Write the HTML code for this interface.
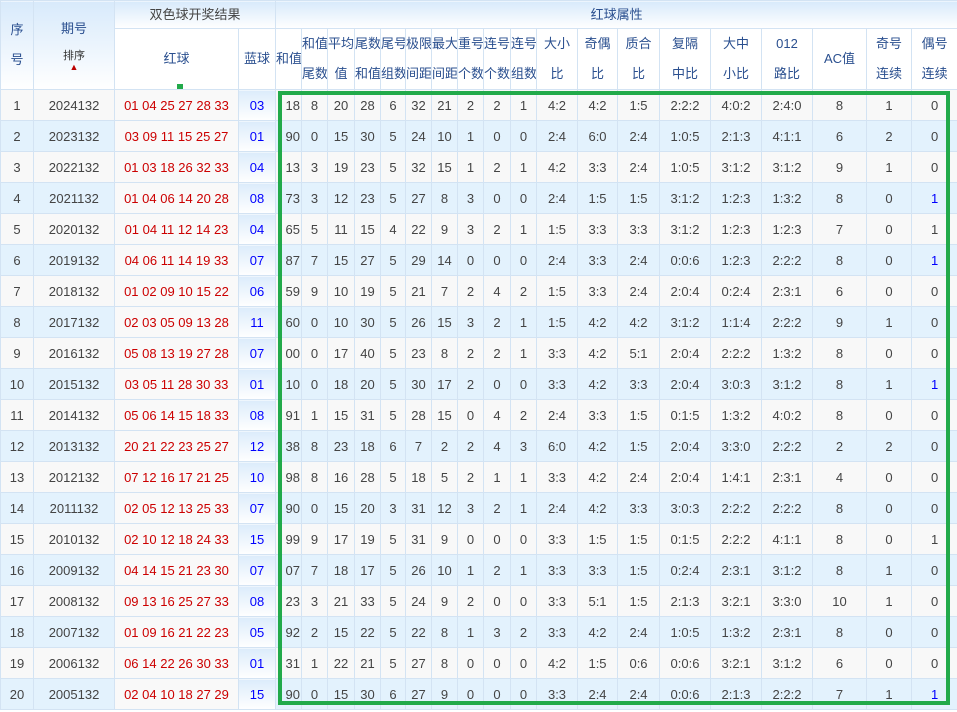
<!DOCTYPE html>
<html><head><meta charset="utf-8">
<style>
body{margin:0;width:957px;height:712px;overflow:hidden;background:#fff;font-family:"Liberation Sans","Noto Sans CJK SC",sans-serif;}
table{border-collapse:collapse;table-layout:fixed;width:957px;position:absolute;left:0;top:0;}
td,th{border:1px solid #d3e3f3;padding:0;text-align:center;font-size:13px;color:#444;overflow:hidden;white-space:nowrap;font-weight:normal;}
thead th{background:linear-gradient(#d8eafb,#fff);color:#2a4f8f;line-height:30px;}
thead tr.r1 th{height:27px;line-height:27px;}
thead tr.r2 th{height:59px;background:linear-gradient(#fff,#fff);}
tbody td{height:30px;}
tbody tr:nth-child(odd) td{background:#f8f8f8;}
tbody tr:nth-child(even) td{background:#e3f2fd;}
tbody td.rb{background:#f9f9f9 !important;color:#c00;font-size:13px;}
tbody td.bb{background:linear-gradient(#dcecfb,#fff) !important;color:#00f;}
tbody td.s{text-align:right;padding-right:1px;}
.b{color:#00f !important;}
#g{position:absolute;left:278px;top:91px;width:664px;height:606px;border:4px solid #22aa4a;}
</style></head><body>
<table>
<colgroup><col style="width:33px"><col style="width:81px"><col style="width:124px"><col style="width:37px"><col style="width:26px"><col style="width:26px"><col style="width:27px"><col style="width:26px"><col style="width:25px"><col style="width:26px"><col style="width:26px"><col style="width:26px"><col style="width:27px"><col style="width:26px"><col style="width:41px"><col style="width:40px"><col style="width:42px"><col style="width:51px"><col style="width:51px"><col style="width:51px"><col style="width:54px"><col style="width:45px"><col style="width:46px"></colgroup>
<thead>
<tr class="r1"><th rowspan="2" style="line-height:30px">序<br>号</th><th rowspan="2"><div style="line-height:20px">期号</div><div style="font-size:11px;line-height:14px;margin-top:10px;color:#333">排序</div><div style="color:#b00;font-size:9px;line-height:8px">▲</div></th><th colspan="2" style="color:#444">双色球开奖结果</th><th colspan="19">红球属性</th></tr>
<tr class="r2"><th style="position:relative">红球<div style="position:absolute;left:62px;bottom:-1px;width:6px;height:6px;background:#22aa4a"></div></th><th>蓝球</th><th>和值</th><th>和值<br>尾数</th><th>平均<br>值</th><th>尾数<br>和值</th><th>尾号<br>组数</th><th>极限<br>间距</th><th>最大<br>间距</th><th>重号<br>个数</th><th>连号<br>个数</th><th>连号<br>组数</th><th>大小<br>比</th><th>奇偶<br>比</th><th>质合<br>比</th><th>复隔<br>中比</th><th>大中<br>小比</th><th>012<br>路比</th><th>AC值</th><th>奇号<br>连续</th><th>偶号<br>连续</th></tr>
</thead>
<tbody>
<tr><td>1</td><td>2024132</td><td class="rb">01 04 25 27 28 33</td><td class="bb">03</td><td class="s">18</td><td>8</td><td>20</td><td>28</td><td>6</td><td>32</td><td>21</td><td>2</td><td>2</td><td>1</td><td>4:2</td><td>4:2</td><td>1:5</td><td>2:2:2</td><td>4:0:2</td><td>2:4:0</td><td>8</td><td>1</td><td>0</td></tr>
<tr><td>2</td><td>2023132</td><td class="rb">03 09 11 15 25 27</td><td class="bb">01</td><td class="s">90</td><td>0</td><td>15</td><td>30</td><td>5</td><td>24</td><td>10</td><td>1</td><td>0</td><td>0</td><td>2:4</td><td>6:0</td><td>2:4</td><td>1:0:5</td><td>2:1:3</td><td>4:1:1</td><td>6</td><td>2</td><td>0</td></tr>
<tr><td>3</td><td>2022132</td><td class="rb">01 03 18 26 32 33</td><td class="bb">04</td><td class="s">13</td><td>3</td><td>19</td><td>23</td><td>5</td><td>32</td><td>15</td><td>1</td><td>2</td><td>1</td><td>4:2</td><td>3:3</td><td>2:4</td><td>1:0:5</td><td>3:1:2</td><td>3:1:2</td><td>9</td><td>1</td><td>0</td></tr>
<tr><td>4</td><td>2021132</td><td class="rb">01 04 06 14 20 28</td><td class="bb">08</td><td class="s">73</td><td>3</td><td>12</td><td>23</td><td>5</td><td>27</td><td>8</td><td>3</td><td>0</td><td>0</td><td>2:4</td><td>1:5</td><td>1:5</td><td>3:1:2</td><td>1:2:3</td><td>1:3:2</td><td>8</td><td>0</td><td class="b">1</td></tr>
<tr><td>5</td><td>2020132</td><td class="rb">01 04 11 12 14 23</td><td class="bb">04</td><td class="s">65</td><td>5</td><td>11</td><td>15</td><td>4</td><td>22</td><td>9</td><td>3</td><td>2</td><td>1</td><td>1:5</td><td>3:3</td><td>3:3</td><td>3:1:2</td><td>1:2:3</td><td>1:2:3</td><td>7</td><td>0</td><td>1</td></tr>
<tr><td>6</td><td>2019132</td><td class="rb">04 06 11 14 19 33</td><td class="bb">07</td><td class="s">87</td><td>7</td><td>15</td><td>27</td><td>5</td><td>29</td><td>14</td><td>0</td><td>0</td><td>0</td><td>2:4</td><td>3:3</td><td>2:4</td><td>0:0:6</td><td>1:2:3</td><td>2:2:2</td><td>8</td><td>0</td><td class="b">1</td></tr>
<tr><td>7</td><td>2018132</td><td class="rb">01 02 09 10 15 22</td><td class="bb">06</td><td class="s">59</td><td>9</td><td>10</td><td>19</td><td>5</td><td>21</td><td>7</td><td>2</td><td>4</td><td>2</td><td>1:5</td><td>3:3</td><td>2:4</td><td>2:0:4</td><td>0:2:4</td><td>2:3:1</td><td>6</td><td>0</td><td>0</td></tr>
<tr><td>8</td><td>2017132</td><td class="rb">02 03 05 09 13 28</td><td class="bb">11</td><td class="s">60</td><td>0</td><td>10</td><td>30</td><td>5</td><td>26</td><td>15</td><td>3</td><td>2</td><td>1</td><td>1:5</td><td>4:2</td><td>4:2</td><td>3:1:2</td><td>1:1:4</td><td>2:2:2</td><td>9</td><td>1</td><td>0</td></tr>
<tr><td>9</td><td>2016132</td><td class="rb">05 08 13 19 27 28</td><td class="bb">07</td><td class="s">00</td><td>0</td><td>17</td><td>40</td><td>5</td><td>23</td><td>8</td><td>2</td><td>2</td><td>1</td><td>3:3</td><td>4:2</td><td>5:1</td><td>2:0:4</td><td>2:2:2</td><td>1:3:2</td><td>8</td><td>0</td><td>0</td></tr>
<tr><td>10</td><td>2015132</td><td class="rb">03 05 11 28 30 33</td><td class="bb">01</td><td class="s">10</td><td>0</td><td>18</td><td>20</td><td>5</td><td>30</td><td>17</td><td>2</td><td>0</td><td>0</td><td>3:3</td><td>4:2</td><td>3:3</td><td>2:0:4</td><td>3:0:3</td><td>3:1:2</td><td>8</td><td>1</td><td class="b">1</td></tr>
<tr><td>11</td><td>2014132</td><td class="rb">05 06 14 15 18 33</td><td class="bb">08</td><td class="s">91</td><td>1</td><td>15</td><td>31</td><td>5</td><td>28</td><td>15</td><td>0</td><td>4</td><td>2</td><td>2:4</td><td>3:3</td><td>1:5</td><td>0:1:5</td><td>1:3:2</td><td>4:0:2</td><td>8</td><td>0</td><td>0</td></tr>
<tr><td>12</td><td>2013132</td><td class="rb">20 21 22 23 25 27</td><td class="bb">12</td><td class="s">38</td><td>8</td><td>23</td><td>18</td><td>6</td><td>7</td><td>2</td><td>2</td><td>4</td><td>3</td><td>6:0</td><td>4:2</td><td>1:5</td><td>2:0:4</td><td>3:3:0</td><td>2:2:2</td><td>2</td><td>2</td><td>0</td></tr>
<tr><td>13</td><td>2012132</td><td class="rb">07 12 16 17 21 25</td><td class="bb">10</td><td class="s">98</td><td>8</td><td>16</td><td>28</td><td>5</td><td>18</td><td>5</td><td>2</td><td>1</td><td>1</td><td>3:3</td><td>4:2</td><td>2:4</td><td>2:0:4</td><td>1:4:1</td><td>2:3:1</td><td>4</td><td>0</td><td>0</td></tr>
<tr><td>14</td><td>2011132</td><td class="rb">02 05 12 13 25 33</td><td class="bb">07</td><td class="s">90</td><td>0</td><td>15</td><td>20</td><td>3</td><td>31</td><td>12</td><td>3</td><td>2</td><td>1</td><td>2:4</td><td>4:2</td><td>3:3</td><td>3:0:3</td><td>2:2:2</td><td>2:2:2</td><td>8</td><td>0</td><td>0</td></tr>
<tr><td>15</td><td>2010132</td><td class="rb">02 10 12 18 24 33</td><td class="bb">15</td><td class="s">99</td><td>9</td><td>17</td><td>19</td><td>5</td><td>31</td><td>9</td><td>0</td><td>0</td><td>0</td><td>3:3</td><td>1:5</td><td>1:5</td><td>0:1:5</td><td>2:2:2</td><td>4:1:1</td><td>8</td><td>0</td><td>1</td></tr>
<tr><td>16</td><td>2009132</td><td class="rb">04 14 15 21 23 30</td><td class="bb">07</td><td class="s">07</td><td>7</td><td>18</td><td>17</td><td>5</td><td>26</td><td>10</td><td>1</td><td>2</td><td>1</td><td>3:3</td><td>3:3</td><td>1:5</td><td>0:2:4</td><td>2:3:1</td><td>3:1:2</td><td>8</td><td>1</td><td>0</td></tr>
<tr><td>17</td><td>2008132</td><td class="rb">09 13 16 25 27 33</td><td class="bb">08</td><td class="s">23</td><td>3</td><td>21</td><td>33</td><td>5</td><td>24</td><td>9</td><td>2</td><td>0</td><td>0</td><td>3:3</td><td>5:1</td><td>1:5</td><td>2:1:3</td><td>3:2:1</td><td>3:3:0</td><td>10</td><td>1</td><td>0</td></tr>
<tr><td>18</td><td>2007132</td><td class="rb">01 09 16 21 22 23</td><td class="bb">05</td><td class="s">92</td><td>2</td><td>15</td><td>22</td><td>5</td><td>22</td><td>8</td><td>1</td><td>3</td><td>2</td><td>3:3</td><td>4:2</td><td>2:4</td><td>1:0:5</td><td>1:3:2</td><td>2:3:1</td><td>8</td><td>0</td><td>0</td></tr>
<tr><td>19</td><td>2006132</td><td class="rb">06 14 22 26 30 33</td><td class="bb">01</td><td class="s">31</td><td>1</td><td>22</td><td>21</td><td>5</td><td>27</td><td>8</td><td>0</td><td>0</td><td>0</td><td>4:2</td><td>1:5</td><td>0:6</td><td>0:0:6</td><td>3:2:1</td><td>3:1:2</td><td>6</td><td>0</td><td>0</td></tr>
<tr><td>20</td><td>2005132</td><td class="rb">02 04 10 18 27 29</td><td class="bb">15</td><td class="s">90</td><td>0</td><td>15</td><td>30</td><td>6</td><td>27</td><td>9</td><td>0</td><td>0</td><td>0</td><td>3:3</td><td>2:4</td><td>2:4</td><td>0:0:6</td><td>2:1:3</td><td>2:2:2</td><td>7</td><td>1</td><td class="b">1</td></tr>
</tbody>
</table>
<div id="g"></div>
</body></html>
